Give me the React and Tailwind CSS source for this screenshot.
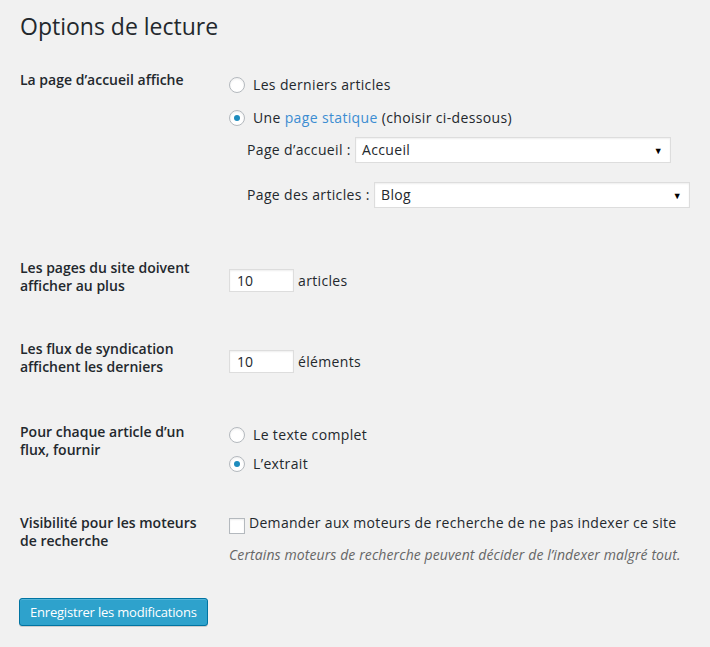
import { useState } from 'react'

function Radio({ checked, onChange, children }) {
  return (
    <label className="flex h-[18px] cursor-pointer items-center" onClick={onChange}>
      <span className="flex h-4 w-4 shrink-0 items-center justify-center rounded-full border border-[#b4b9be] bg-white shadow-[inset_0_1px_2px_rgba(0,0,0,0.07)]">
        {checked && <span className="h-[6px] w-[6px] rounded-full bg-[#1e8cbe]" />}
      </span>
      <span className="ml-2 tracking-[0.35px] text-[#23282d]">{children}</span>
    </label>
  )
}

function FakeSelect({ value }) {
  return (
    <div className="flex h-[26px] w-[316px] items-center justify-between border border-[#ddd] bg-white pl-[6px] pr-[7px] tracking-[0.35px] text-[#23282d] shadow-[inset_0_1px_2px_rgba(0,0,0,0.07)]">
      <span>{value}</span>
      <span className="text-[9px] leading-none text-black">▼</span>
    </div>
  )
}

function NumberBox({ value }) {
  return (
    <div className="flex h-[23px] w-[65px] items-center border border-[#ddd] bg-white pl-[7px] text-[14px] text-[#23282d] shadow-[inset_0_1px_2px_rgba(0,0,0,0.07)]">
      {value}
    </div>
  )
}

export default function App() {
  const [front, setFront] = useState('page')
  const [feed, setFeed] = useState('excerpt')
  const [noindex, setNoindex] = useState(false)

  return (
    <div
      className="min-h-screen bg-[#f1f1f1] px-5 text-[14px] leading-[18px] text-[#444]"
      style={{ fontFamily: '"Open Sans", "Liberation Sans", sans-serif' }}
    >
      <h1 className="pt-[12px] text-[23px] leading-[29px] font-normal text-[#23282d]">Options de lecture</h1>

      {/* page d'accueil */}
      <div className="mt-[30px] flex items-start">
        <div className="w-[209px] shrink-0 font-semibold text-[#23282d]">La page d’accueil affiche</div>
        <div className="pt-[5px]">
          <Radio checked={front === 'posts'} onChange={() => setFront('posts')}>Les derniers articles</Radio>
          <div className="mt-[15px]">
            <Radio checked={front === 'page'} onChange={() => setFront('page')}>
              Une <a className="text-[#3c8dd2]" href="#">page statique</a> (choisir ci-dessous)
            </Radio>
          </div>
          <div className="mt-[10px] flex items-center pl-[18px]">
            <span className="w-[108px] shrink-0 tracking-[0.35px] text-[#23282d]">Page d’accueil :</span>
            <FakeSelect value="Accueil" />
          </div>
          <div className="mt-[19px] flex items-center pl-[18px]">
            <span className="w-[127px] shrink-0 tracking-[0.35px] text-[#23282d]">Page des articles :</span>
            <FakeSelect value="Blog" />
          </div>
        </div>
      </div>

      {/* pages du site */}
      <div className="mt-[51px] flex items-start">
        <div className="w-[209px] shrink-0 font-semibold text-[#23282d]">Les pages du site doivent<br />afficher au plus</div>
        <div className="flex items-center pt-[10px]">
          <NumberBox value="10" />
          <span className="ml-[4px] tracking-[0.35px] text-[#23282d]">articles</span>
        </div>
      </div>

      {/* flux */}
      <div className="mt-[45px] flex items-start">
        <div className="w-[209px] shrink-0 font-semibold text-[#23282d]">Les flux de syndication<br />affichent les derniers</div>
        <div className="flex items-center pt-[10px]">
          <NumberBox value="10" />
          <span className="ml-[4px] tracking-[0.35px] text-[#23282d]">éléments</span>
        </div>
      </div>

      {/* contenu des flux */}
      <div className="mt-[47px] flex items-start">
        <div className="w-[209px] shrink-0 font-semibold text-[#23282d]">Pour chaque article d’un<br />flux, fournir</div>
        <div className="pt-[3px]">
          <Radio checked={feed === 'full'} onChange={() => setFeed('full')}>Le texte complet</Radio>
          <div className="mt-[11px]">
            <Radio checked={feed === 'excerpt'} onChange={() => setFeed('excerpt')}>L’extrait</Radio>
          </div>
        </div>
      </div>

      {/* visibilité */}
      <div className="mt-[41px] flex items-start">
        <div className="w-[209px] shrink-0 font-semibold text-[#23282d]">Visibilité pour les moteurs<br />de recherche</div>
        <div>
          <label className="flex cursor-pointer items-start" onClick={() => setNoindex(!noindex)}>
            <span className="mt-[4px] flex h-4 w-4 shrink-0 items-center justify-center border border-[#b4b9be] bg-white text-[12px] leading-none text-[#1e8cbe] shadow-[inset_0_1px_2px_rgba(0,0,0,0.07)]">
              {noindex ? '✓' : ''}
            </span>
            <span className="ml-[4px] tracking-[0.3px] text-[#23282d]">Demander aux moteurs de recherche de ne pas indexer ce site</span>
          </label>
          <p className="mt-[12px] text-[14px] italic tracking-[0.1px] text-[#666]">Certains moteurs de recherche peuvent décider de l’indexer malgré tout.</p>
        </div>
      </div>

      <button className="mt-[34px] -ml-px h-[28px] rounded-[3px] border border-[#0074a2] bg-[#2ea2cc] px-[10px] text-[13px] tracking-[-0.2px] text-white shadow-[inset_0_1px_0_rgba(120,200,230,0.5),0_1px_0_rgba(0,0,0,0.15)]">
        Enregistrer les modifications
      </button>
    </div>
  )
}
